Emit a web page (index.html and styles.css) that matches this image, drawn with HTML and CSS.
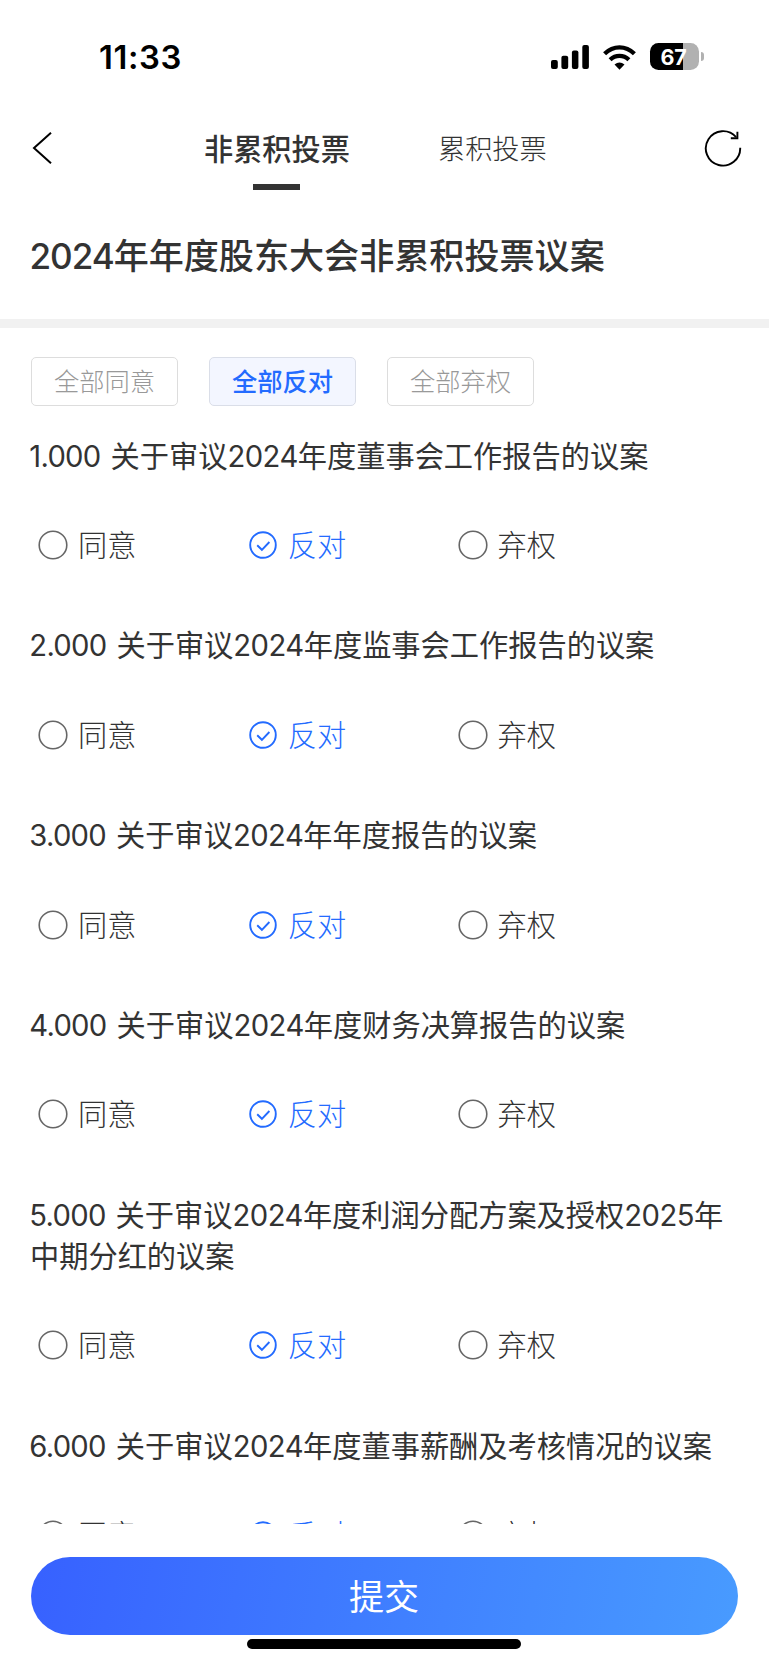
FILE: index.html
```html
<!DOCTYPE html>
<html lang="zh-CN">
<head>
<meta charset="utf-8">
<title>非累积投票</title>
<link rel="stylesheet" href="styles.css">
</head>
<body>
<svg class="defs" width="0" height="0">
  <symbol id="off" viewBox="0 0 30 30"><circle cx="15" cy="15" r="13.8" fill="none" stroke="#666" stroke-width="1.6"/></symbol>
  <symbol id="on" viewBox="0 0 30 30"><circle cx="15" cy="15" r="12.8" fill="none" stroke="#236bff" stroke-width="1.9"/><path d="M9.2 15.2l4.7 4.6 7.5-7.8" fill="none" stroke="#236bff" stroke-width="1.9"/></symbol>
</svg>
<div class="screen">
  <header class="status">
    <span class="time">11:33</span>
    <div class="indicators">
      <svg class="signal" width="38" height="24" viewBox="0 0 38 24"><rect x="0" y="15" width="6.8" height="9" rx="2"/><rect x="10.4" y="10.7" width="6.8" height="13.3" rx="2"/><rect x="20.9" y="5.6" width="6.5" height="18.4" rx="2"/><rect x="31.3" y="0" width="6.6" height="24" rx="2"/></svg>
      <svg class="wifi" width="33" height="25" viewBox="0 0 33 25"><g fill="none" stroke="#000" stroke-width="4.3"><path d="M1.6 8.7Q8.2 2.3 16.5 2.3T31.4 8.7"/><path d="M7.1 14.8Q11.2 10.9 16.5 10.9T25.9 14.8"/></g><path d="M11.5 19.6Q16.5 15.2 21.5 19.6L16.5 24.7Z"/></svg>
      <div class="battery"><span class="level">67</span><i class="cap"></i></div>
    </div>
  </header>
  <nav class="nav">
    <svg class="back" width="20" height="34" viewBox="0 0 20 34"><path d="M19 1.7L2 17l17 15.3" fill="none" stroke="#000" stroke-width="2"/></svg>
    <span class="tab active">非累积投票</span>
    <span class="tab">累积投票</span>
    <svg class="refresh" width="38" height="38" viewBox="0 0 38 38"><g fill="none" stroke="#000" stroke-width="1.9"><path d="M36.2 18.7A17.2 17.2 0 1 1 32.1 8.2"/><path d="M33.4 2.8V9.2H26.8"/></g></svg>
  </nav>
  <h1 class="title"><span class="num">2024</span>年年度股东大会非累积投票议案</h1>
  <div class="bulk">
    <span class="pick">全部同意</span><span class="pick chosen">全部反对</span><span class="pick">全部弃权</span>
  </div>
  <main class="list">
    <section class="item">
      <p class="name"><span class="num lead">1.000 </span>关于审议<span class="num">2024</span>年度董事会工作报告的议案</p>
      <div class="options"><span class="opt"><svg class="radio"><use href="#off"/></svg>同意</span><span class="opt sel"><svg class="radio"><use href="#on"/></svg>反对</span><span class="opt"><svg class="radio"><use href="#off"/></svg>弃权</span></div>
    </section>
    <section class="item">
      <p class="name"><span class="num lead">2.000 </span>关于审议<span class="num">2024</span>年度监事会工作报告的议案</p>
      <div class="options"><span class="opt"><svg class="radio"><use href="#off"/></svg>同意</span><span class="opt sel"><svg class="radio"><use href="#on"/></svg>反对</span><span class="opt"><svg class="radio"><use href="#off"/></svg>弃权</span></div>
    </section>
    <section class="item">
      <p class="name"><span class="num lead">3.000 </span>关于审议<span class="num">2024</span>年年度报告的议案</p>
      <div class="options"><span class="opt"><svg class="radio"><use href="#off"/></svg>同意</span><span class="opt sel"><svg class="radio"><use href="#on"/></svg>反对</span><span class="opt"><svg class="radio"><use href="#off"/></svg>弃权</span></div>
    </section>
    <section class="item">
      <p class="name"><span class="num lead">4.000 </span>关于审议<span class="num">2024</span>年度财务决算报告的议案</p>
      <div class="options"><span class="opt"><svg class="radio"><use href="#off"/></svg>同意</span><span class="opt sel"><svg class="radio"><use href="#on"/></svg>反对</span><span class="opt"><svg class="radio"><use href="#off"/></svg>弃权</span></div>
    </section>
    <section class="item">
      <p class="name"><span class="num lead">5.000 </span>关于审议<span class="num">2024</span>年度利润分配方案及授权<span class="num">2025</span>年<br>中期分红的议案</p>
      <div class="options"><span class="opt"><svg class="radio"><use href="#off"/></svg>同意</span><span class="opt sel"><svg class="radio"><use href="#on"/></svg>反对</span><span class="opt"><svg class="radio"><use href="#off"/></svg>弃权</span></div>
    </section>
    <section class="item">
      <p class="name"><span class="num lead">6.000 </span>关于审议<span class="num">2024</span>年度董事薪酬及考核情况的议案</p>
      <div class="options"><span class="opt"><svg class="radio"><use href="#off"/></svg>同意</span><span class="opt sel"><svg class="radio"><use href="#on"/></svg>反对</span><span class="opt"><svg class="radio"><use href="#off"/></svg>弃权</span></div>
    </section>
  </main>
  <footer class="footer">
    <div class="submit">提交</div>
    <div class="home"></div>
  </footer>
</div>
</body>
</html>
```

FILE: styles.css
```css
* { box-sizing: border-box; }
body { margin: 0; background: #fff; color: #333; font-family: "Noto Sans CJK SC", sans-serif; font-weight: 300; }
.defs { position: absolute; }
.screen { display: flex; flex-direction: column; width: 769px; height: 1665px; overflow: hidden; }
.status { display: flex; justify-content: space-between; height: 114px; padding: 38px 65px 0 99px; color: #000; }
.time { font: 600 32.8px/38px Inter, sans-serif; letter-spacing: .6px; }
.indicators { display: flex; align-items: flex-start; padding-top: 5px; }
.signal { margin-top: 2px; margin-right: 14px; }
.wifi { margin-top: 2px; margin-right: 14px; }
.battery { display: flex; align-items: center; gap: 2px; }
.level { width: 49px; height: 27px; padding-right: 2px; border-radius: 8.5px; background: linear-gradient(90deg, #000 67%, #b1b1b1 67%); color: #fff; font: 700 21.5px/28px Inter, sans-serif; text-align: center; letter-spacing: -.2px; }
.cap { width: 3px; height: 9px; border-radius: 0 4px 4px 0; background: #b1b1b1; }
.nav { display: flex; align-items: center; height: 80px; padding: 0 27px 12px 32px; }
.tab { position: relative; margin: -3px 0 0 88px; font-size: 27.2px; line-height: 40px; }
.tab.active { margin-left: 152px; font-size: 29.2px; font-weight: 500; }
.tab.active::after { content: ""; position: absolute; left: 50%; top: 57.5px; width: 47px; height: 6px; margin-left: -23.5px; background: #333; }
.refresh { margin-left: auto; }
.title { height: 125px; margin: 0; padding: 34.5px 29.5px 0; font-size: 35.1px; line-height: 50px; font-weight: 500; white-space: nowrap; }
.num { font-family: Inter, sans-serif; font-weight: 400; line-height: 0; letter-spacing: -.018em; white-space: pre; }
.title .num { font-weight: 500; letter-spacing: -.03em; }
.lead { margin: 0 2.5px 0 -.7px; letter-spacing: -.025em; }
.bulk { display: flex; gap: 31px; padding: 29px 31px 0; border-top: 9px solid #f1f1f1; }
.pick { width: 147px; height: 49px; border: 1px solid #ddd; border-radius: 5px; color: #999; font-size: 25.3px; line-height: 45px; text-align: center; }
.pick.chosen { background: #f3f6ff; border-color: #dadee8; color: #236bff; font-weight: 500; }
.list { flex: none; height: 1117.5px; padding: 27.7px 30px 0; overflow: hidden; }
.name { margin: 0; font-size: 29.22px; line-height: 41.4px; font-weight: 400; white-space: nowrap; }
.options { display: flex; margin: 55px 0 63.5px 8px; height: 29.8px; }
.opt { display: flex; align-items: flex-start; width: 209.8px; font-size: 29.2px; line-height: 27px; }
.opt.sel { color: #236bff; }
.radio { flex: none; width: 30px; height: 30px; margin-right: 10px; }
.footer { display: flex; flex-direction: column; align-items: center; padding: 33px 1px 0 0; }
.submit { width: 707px; height: 78px; border-radius: 39px; background: linear-gradient(100deg, #3761ff, #489bff); color: #fff; font-size: 35.1px; line-height: 75px; font-weight: 400; text-align: center; }
.home { width: 274px; height: 10px; margin-top: 4.5px; border-radius: 5px; background: #000; }
```
